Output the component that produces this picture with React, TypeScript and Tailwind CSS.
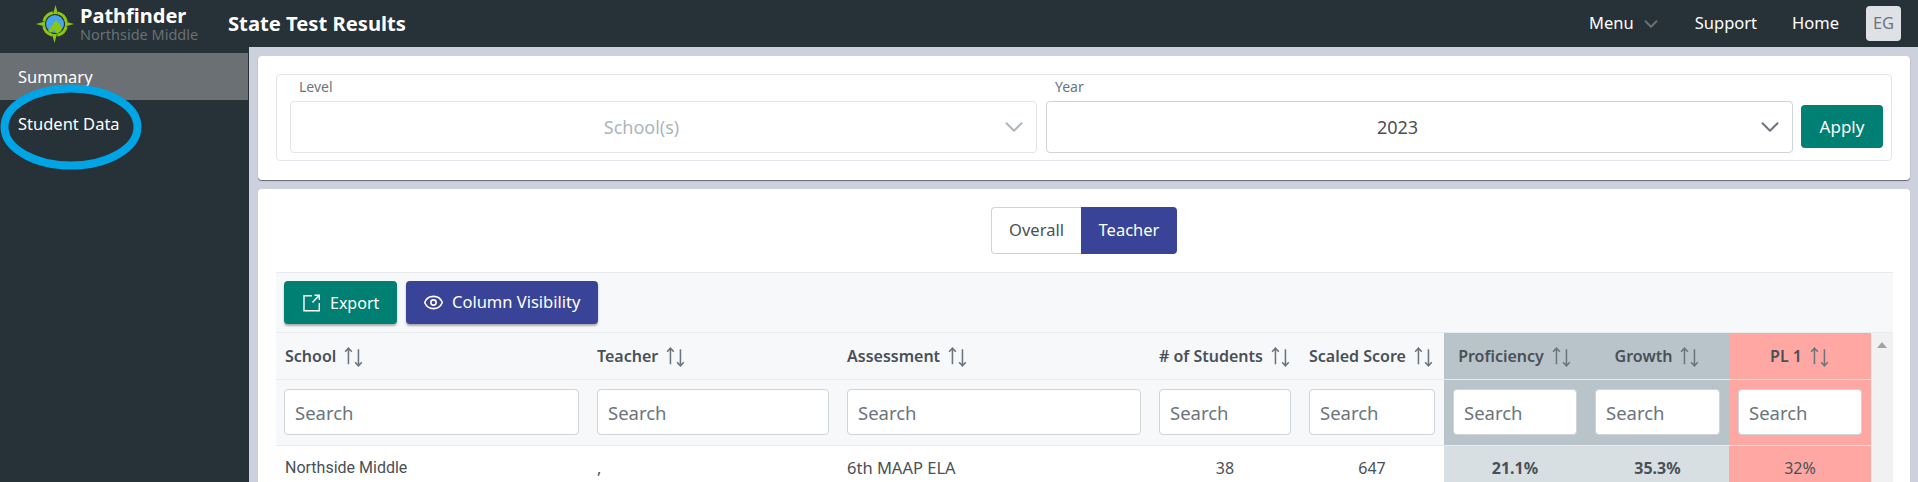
import { ChevronDown, Eye } from 'lucide-react';

const columns = [
  { label: 'School', width: 'w-[312px]', head: 'justify-start', tint: 'bg-[#f7f8fa]' },
  { label: 'Teacher', width: 'w-[250px]', head: 'justify-start', tint: 'bg-[#f7f8fa]' },
  { label: 'Assessment', width: 'w-[312px]', head: 'justify-start', tint: 'bg-[#f7f8fa]' },
  { label: '# of Students', width: 'w-[150px]', head: 'justify-start', tint: 'bg-[#f7f8fa]' },
  { label: 'Scaled Score', width: 'w-[144px]', head: 'justify-start', tint: 'bg-[#f7f8fa]' },
  { label: 'Proficiency', width: 'w-[142px]', head: 'justify-center', tint: 'bg-[#b9c4ca]' },
  { label: 'Growth', width: 'w-[143px]', head: 'justify-center', tint: 'bg-[#b9c4ca]' },
  { label: 'PL 1', width: 'w-[142px]', head: 'justify-center', tint: 'bg-[#ffa8a3]' },
];

const rowCells = [
  { text: 'Northside Middle', className: 'text-left font-[Roboto]' },
  { text: ',', className: 'text-left' },
  { text: '6th MAAP ELA', className: 'text-left text-[16.5px]' },
  { text: '38', className: 'text-center' },
  { text: '647', className: 'text-center' },
  { text: '21.1%', className: 'text-center font-bold bg-[#d7dfe2]' },
  { text: '35.3%', className: 'text-center font-bold bg-[#d7dfe2]' },
  { text: '32%', className: 'text-center bg-[#ffa8a3]' },
];

const Logo = () => (
  <svg viewBox="0 0 38 38" className="w-[38px] h-[38px] shrink-0 -ml-px">
    <path d="M19.5 0l2.5 9h-5zM38 19l-9 2.5v-5zM18.5 38L16 29h5zM0 19l9-2.5v5z" fill="#8cc611" />
    <circle cx="19" cy="19" r="11.5" fill="none" stroke="#8cc611" strokeWidth="3" strokeDasharray="13 5.06" strokeDashoffset="-2.5" />
    <circle cx="19" cy="19" r="9" fill="#45a5ec" />
    <path d="M12 26l8-11 6 7-1 4-4 3-3-5-3 4z" fill="#8cc611" />
  </svg>
);

const SortIcon = () => (
  <svg viewBox="0 0 18 18" className="w-[20px] h-[20px] mt-[3px] shrink-0 text-[#6c757d]" fill="none" stroke="currentColor" strokeWidth="1.4">
    <path d="M4 15.5V1M1 4.2L4 1l3 3.2" />
    <path d="M13 2v15M10 13.8l3 3.2 3-3.2" />
  </svg>
);

const ExportIcon = () => (
  <svg viewBox="0 0 18 18" className="w-[18px] h-[18px] shrink-0" fill="none" stroke="currentColor" strokeWidth="1.4">
    <path d="M9 1.7H1v15h15.3V9" />
    <path d="M9.5 8.5l6-6.5M11.5 1.2h4.8V6" />
  </svg>
);

const Select = ({ label, value, disabled }: { label: string; value: string; disabled?: boolean }) => (
  <div className="flex-1">
    <div className="h-[26px] pl-[9px] pt-[2px] text-sm leading-[19px] text-[#6c757d]">{label}</div>
    <div
      className={`relative h-[52px] flex items-center justify-center pr-[44px] text-[18px] rounded border ${
        disabled ? 'border-[#e2e5e9] text-[#adb5bd]' : 'border-[#ced4da] text-[#495057]'
      }`}
    >
      {value}
      <ChevronDown
        size={30}
        strokeWidth={1.6}
        className={`absolute right-[7px] top-1/2 -translate-y-1/2 ${disabled ? 'text-[#adb5bd]' : 'text-[#6c757d]'}`}
      />
    </div>
  </div>
);

export default function App() {
  return (
    <div
      className="h-[482px] flex flex-col overflow-hidden bg-[#cdd1de] text-[#495057]"
      style={{ fontFamily: '"Noto Sans", sans-serif' }}
    >
      {/* Top bar */}
      <header className="h-[47px] shrink-0 flex items-center bg-[#263138] pl-[37px] pr-[17px] text-white">
        <Logo />
        <div className="ml-[6px] w-[148px]">
          <div className="text-[20px] leading-[21px] font-bold">Pathfinder</div>
          <div className="text-[14.5px] leading-[16px] text-[#6a7073]">Northside Middle</div>
        </div>
        <div className="text-[20.2px] font-bold">State Test Results</div>
        <nav className="ml-auto flex items-center text-[16.5px]">
          <span>Menu</span>
          <ChevronDown size={22} strokeWidth={2.2} className="ml-[6px] text-[#6a7073]" />
          <span className="ml-[33px]">Support</span>
          <span className="ml-[35px]">Home</span>
          <span className="ml-[27px] w-[35px] h-[35px] flex items-center justify-center rounded bg-[#dee2e6] text-[#6c757d]">
            EG
          </span>
        </nav>
      </header>

      <div className="flex flex-1 min-h-0">
        {/* Sidebar */}
        <aside className="relative w-[249px] shrink-0 bg-[#263138] pt-[6px] pr-px text-[16.5px] text-white">
          <div className="h-[47px] pl-[18px] pt-[12px] bg-[#6a7073]">Summary</div>
          <div className="relative z-10 h-[47px] pl-[18px] pt-[12px]">Student Data</div>
          {/* hand-drawn marker round the menu item */}
          <svg viewBox="0 0 142 86" className="absolute left-0 top-[37px] w-[142px] h-[86px]">
            <ellipse cx="71" cy="43" rx="66.5" ry="38.5" fill="#263138" stroke="#00a5e6" strokeWidth="8" />
          </svg>
        </aside>

        {/* Main */}
        <main className="flex-1 min-w-0 pl-[9px] pr-[8px] pt-[9px] flex flex-col gap-[9px]">
          <section className="h-[124px] shrink-0 bg-white rounded p-[18px] shadow-[0_1px_1px_rgba(0,0,0,0.5)]">
            <div className="h-[87px] flex items-start gap-[8px] rounded border border-[#e2e5e9] pl-[13px] pr-[8px]">
              <div className="flex-1 flex gap-[9px]">
                <Select label="Level" value="School(s)" disabled />
                <Select label="Year" value="2023" />
              </div>
              <button className="mt-[30px] w-[82px] h-[43px] rounded bg-[#008073] text-[17px] text-white">Apply</button>
            </div>
          </section>

          <section className="flex-1 bg-white rounded-t pt-[18px] px-[18px] overflow-hidden">
            <div className="flex justify-center text-[16.5px]">
              <button className="w-[90px] h-[47px] rounded-l border border-r-0 border-[#ced4da]">Overall</button>
              <button className="w-[96px] h-[47px] rounded-r bg-[#394498] text-white">Teacher</button>
            </div>

            <div className="mt-[18px] w-[1617px] h-[61px] flex items-start gap-[9px] pl-[8px] pt-[8px] bg-[#f7f8fa] border-y border-[#e9ecef]">
              <button className="w-[113px] h-[43px] flex items-center gap-[9px] pl-[19px] rounded bg-[#008073] text-white shadow-[0_2px_2px_rgba(0,0,0,0.3)]">
                <ExportIcon />
                Export
              </button>
              <button className="w-[192px] h-[43px] flex items-center gap-[8px] pl-[17px] rounded bg-[#394498] text-[16.5px] text-white shadow-[0_2px_2px_rgba(0,0,0,0.3)]">
                <Eye size={21} strokeWidth={1.8} />
                Column Visibility
              </button>
            </div>

            <div className="flex w-[1617px]">
              <table className="w-[1595px] table-fixed border-collapse">
                <colgroup>
                  {columns.map((c) => (
                    <col key={c.label} className={c.width} />
                  ))}
                </colgroup>
                <thead>
                  <tr className="h-[46px]">
                    {columns.map((c) => (
                      <th key={c.label} className={`px-[9px] font-semibold border-b border-[#e9ecef] ${c.tint}`}>
                        <div className={`flex items-center gap-[8px] whitespace-nowrap ${c.head}`}>
                          {c.label}
                          <SortIcon />
                        </div>
                      </th>
                    ))}
                  </tr>
                  <tr className="h-[66px]">
                    {columns.map((c) => (
                      <th key={c.label} className={`px-[9px] first:pl-[8px] border-b border-[#e9ecef] ${c.tint}`}>
                        <input
                          placeholder="Search"
                          className="w-full h-[46px] px-[10px] rounded border border-[#ced4da] bg-white text-[18.5px] font-normal placeholder:text-[#6c757d]"
                        />
                      </th>
                    ))}
                  </tr>
                </thead>
                <tbody>
                  <tr className="h-[46px]">
                    {rowCells.map((cell, i) => (
                      <td key={i} className={`px-[9px] ${cell.className}`}>
                        {cell.text}
                      </td>
                    ))}
                  </tr>
                </tbody>
              </table>

              {/* Scrollbar */}
              <div className="w-[22px] bg-[#f1f1f1] flex justify-center pt-[9px]">
                <div className="w-0 h-0 border-x-[5px] border-x-transparent border-b-[6px] border-b-[#a3a3a3]" />
              </div>
            </div>
          </section>
        </main>
      </div>
    </div>
  );
}
